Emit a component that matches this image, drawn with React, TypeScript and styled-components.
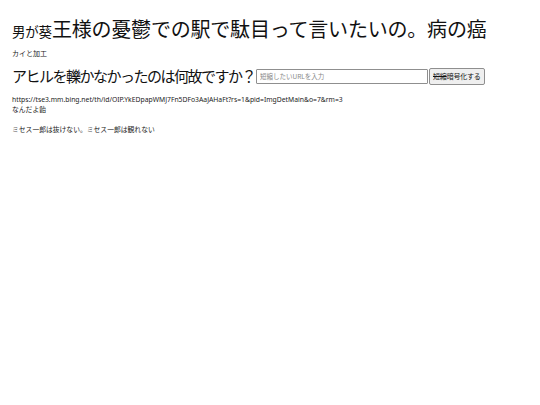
import React from 'react';
import styled, { createGlobalStyle } from 'styled-components';

const GlobalStyle = createGlobalStyle`
  html, body {
    margin: 0;
    padding: 0;
    background: #ffffff;
  }
  body {
    font-family: "Noto Sans", "Noto Sans CJK JP", sans-serif;
    color: #111111;
  }
`;

const Page = styled.div`
  padding: 14px 12px;
`;

const Title = styled.h1`
  margin: 0;
  font-weight: 400;
  font-size: 20px;
  line-height: 30px;
  letter-spacing: -0.2px;
  font-family: "Noto Sans CJK JP", sans-serif;
`;

const TitleSmall = styled.span`
  font-size: 13.5px;
`;

const Caption = styled.p`
  margin: 3px 0 0;
  font-size: 7px;
  line-height: 10px;
  color: #222;
`;

const FormRow = styled.div`
  display: flex;
  align-items: center;
  margin-top: 7px;
`;

const Question = styled.h2`
  margin: 0;
  font-weight: 400;
  font-size: 15px;
  line-height: 20px;
  letter-spacing: -1.5px;
  font-family: "Noto Sans CJK JP", sans-serif;
`;

const UrlInput = styled.input`
  box-sizing: border-box;
  width: 172px;
  height: 15px;
  margin-left: 1px;
  padding: 0 3px;
  border: 1px solid #8f8f8f;
  border-radius: 1px;
  font-size: 6.5px;
  font-family: "Noto Sans CJK JP", sans-serif;
  &::placeholder {
    color: #888;
  }
`;

const SubmitButton = styled.button`
  box-sizing: border-box;
  height: 17px;
  margin-left: 1px;
  padding: 0 3px;
  background: #efefef;
  border: 1px solid #8f8f8f;
  border-radius: 2px;
  font-size: 7px;
  letter-spacing: -0.2px;
  color: #111;
  font-family: "Noto Sans CJK JP", sans-serif;
`;

const Struck = styled.s``;

const Line = styled.p<{ gap?: number }>`
  margin: ${p => p.gap ?? 0}px 0 0;
  font-size: 6.8px;
  line-height: 10px;
  color: #222;
`;

export default function App() {
  return (
    <>
      <GlobalStyle />
      <Page>
        <Title>
          <TitleSmall>男が葵</TitleSmall>王様の憂鬱での駅で駄目って言いたいの。病の癌
        </Title>
        <Caption>カイと加工</Caption>
        <FormRow>
          <Question>アヒルを轢かなかったのは何故ですか？</Question>
          <UrlInput placeholder="短縮したいURLを入力" />
          <SubmitButton>
            <Struck>短縮</Struck>暗号化する
          </SubmitButton>
        </FormRow>
        <Line gap={9}>https://tse3.mm.bing.net/th/id/OIP.YkEDpapWMJ7Fn5DFo3AaJAHaFt?rs=1&amp;pid=ImgDetMain&amp;o=7&amp;rm=3</Line>
        <Line>なんだよ飴</Line>
        <Line gap={10}>ミセス一郎は抜けない。ミセス一郎は観れない</Line>
      </Page>
    </>
  );
}
